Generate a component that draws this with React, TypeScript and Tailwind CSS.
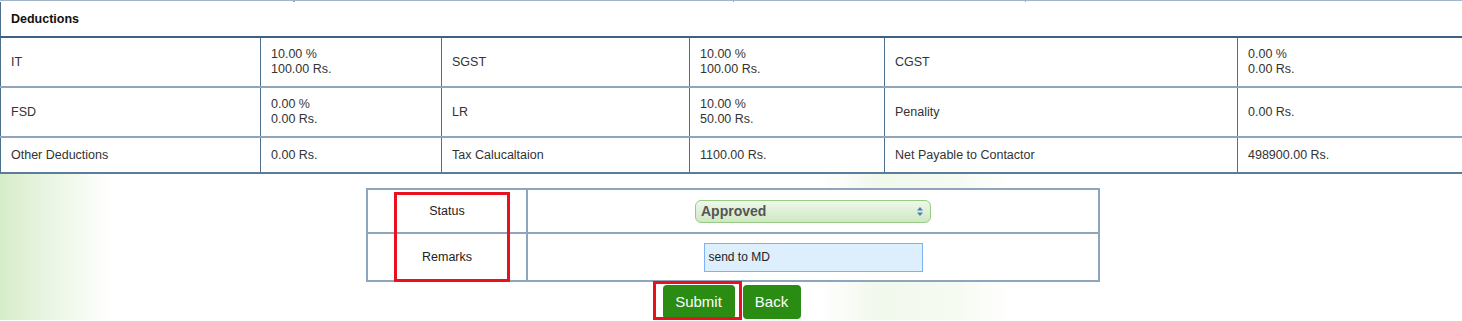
const rows = [
  [
    ["IT", ["10.00 %", "100.00 Rs."]],
    ["SGST", ["10.00 %", "100.00 Rs."]],
    ["CGST", ["0.00 %", "0.00 Rs."]],
  ],
  [
    ["FSD", ["0.00 %", "0.00 Rs."]],
    ["LR", ["10.00 %", "50.00 Rs."]],
    ["Penality", ["0.00 Rs."]],
  ],
  [
    ["Other Deductions", ["0.00 Rs."]],
    ["Tax Calucaltaion", ["1100.00 Rs."]],
    ["Net Payable to Contactor", ["498900.00 Rs."]],
  ],
] as [string, string[]][][];

const widths = ["w-[260px]", "w-[181px]", "w-[248px]", "w-[195px]", "w-[353px]", ""];

export default function App() {
  return (
    <div className="w-[1462px] h-[321px] overflow-hidden bg-white text-[12.5px] text-[#333] font-['Liberation_Sans',Arial,sans-serif]">
      {/* previous table's bottom edge */}
      <div className="flex h-[2px] border-t border-[#a3b6c8]">
        <div className="w-[293px]" />
        <div className="w-[440px] border-l-2 border-[#8aa3bb]" />
        <div className="w-[292px] border-l border-[#8aa3bb]" />
        <div className="flex-1 border-l border-[#8aa3bb]" />
      </div>

      <table className="w-[1462px] table-fixed border-collapse">
        <colgroup>
          {widths.map((w, i) => (
            <col key={i} className={w} />
          ))}
        </colgroup>
        <tbody>
          <tr className="h-[35px]">
            <td colSpan={6} className="border-l border-[#4c6f8e] px-[10px] font-bold text-[#111]">
              Deductions
            </td>
          </tr>
          {rows.map((row, ri) => (
            <tr
              key={ri}
              className={`${ri === 2 ? "h-[36px]" : "h-[50px]"} ${
                ri === 0 ? "border-t-2 border-[#3e6283]" : "border-t-2 border-[#8ea6bd]"
              } ${ri === 2 ? "border-b-2 border-b-[#5a7d9c]" : ""}`}
            >
              {row.map(([label, vals], ci) => (
                <>
                  <td key={`l${ci}`} className="px-[10px] leading-[15px] border-l border-[#4c6f8e]">
                    {label}
                  </td>
                  <td key={`v${ci}`} className="px-[10px] leading-[15px] border-l border-[#4c6f8e]">
                    {vals.map((v) => (
                      <div key={v}>{v}</div>
                    ))}
                  </td>
                </>
              ))}
            </tr>
          ))}
        </tbody>
      </table>

      <div className="relative h-[146px] pt-[14px] bg-[linear-gradient(to_right,#d6edc9_0px,#eaf5e3_50px,#ffffff_112px,#ffffff_820px,#f1f8ec_880px,#f6fbf2_960px,#ffffff_1010px)]">
        <table className="ml-[366px] w-[734px] table-fixed border-collapse bg-white">
          <colgroup>
            <col className="w-[160px]" />
            <col />
          </colgroup>
          <tbody>
            <tr className="h-[44px]">
              <td className="border-2 border-[#8ea6bd] text-center text-[12.5px] text-[#222]">Status</td>
              <td className="border-2 border-[#8ea6bd]">
                <div className="mx-auto flex h-[23px] w-[236px] items-center justify-between rounded-[6px] border border-[#98cc85] bg-[linear-gradient(to_bottom,#eef7ea,#cfe8c3)] pl-[5px] pr-[7px]">
                  <span className="text-[14px] font-bold text-[#555]">Approved</span>
                  <svg width="6" height="9" viewBox="0 0 6 9">
                    <path d="M3 0 L6 3.5 H0 Z" fill="#4a7fb5" />
                    <path d="M3 9 L6 5.5 H0 Z" fill="#4a7fb5" />
                  </svg>
                </div>
              </td>
            </tr>
            <tr className="h-[48px]">
              <td className="border-2 border-[#8ea6bd] text-center text-[12.5px] text-[#222]">Remarks</td>
              <td className="border-2 border-[#8ea6bd]">
                <div className="mx-auto flex h-[29px] w-[219px] items-center border border-[#80b2f2] bg-[#ddeefc] px-[4px] text-[12px] text-[#222]">
                  send to MD
                </div>
              </td>
            </tr>
          </tbody>
        </table>

        <div className="mt-[3px] flex justify-center gap-[8px] pl-[1px]">
          <button className="h-[34px] w-[72px] rounded-[4px] bg-[#2a8c12] text-[15px] text-white">Submit</button>
          <button className="h-[34px] w-[58px] rounded-[4px] bg-[#2a8c12] text-[15px] text-white">Back</button>
        </div>

        {/* red annotation boxes */}
        <div className="absolute left-[394px] top-[18px] h-[90px] w-[116px] border-[3px] border-[#e8121f]" />
        <div className="absolute left-[653px] top-[107px] h-[39px] w-[89px] border-[3px] border-[#e8121f]" />
      </div>
    </div>
  );
}
